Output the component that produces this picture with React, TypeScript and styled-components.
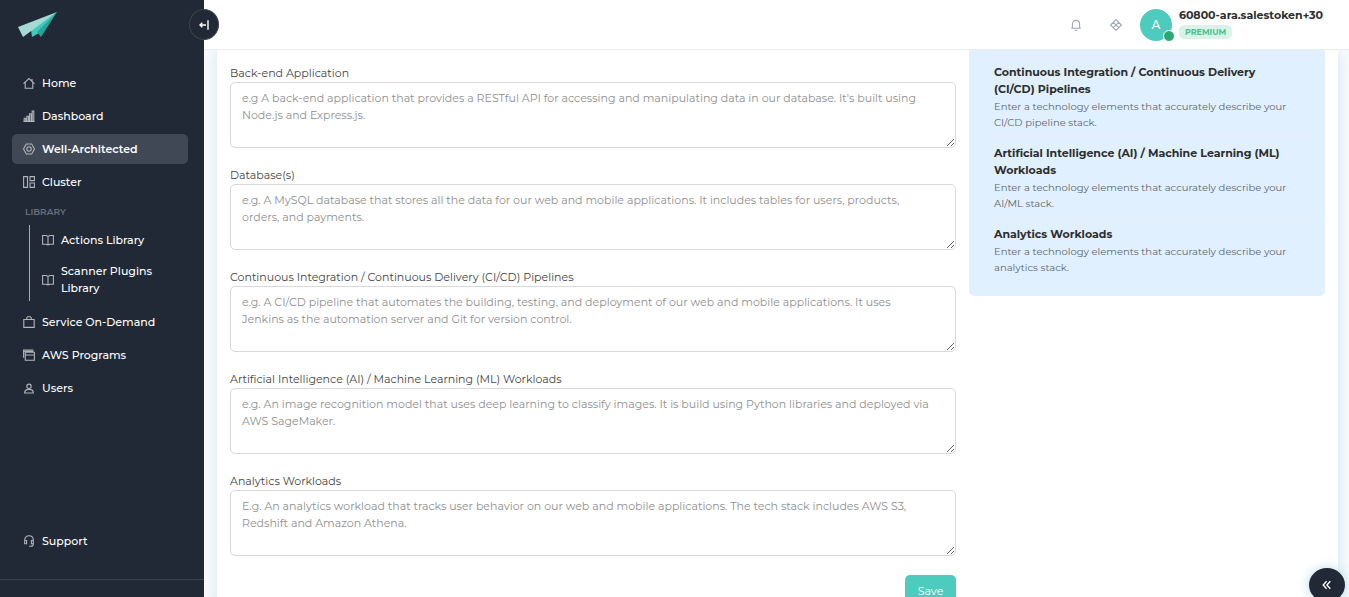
import React from "react";
import styled, { createGlobalStyle, css } from "styled-components";

const Global = createGlobalStyle`
  * { box-sizing: border-box; }
  body { margin: 0; }
  body, button, textarea { font-family: Montserrat, Inter, sans-serif; }
`;

const Shell = styled.div`
  display: grid;
  grid-template-columns: 204px minmax(0, 1fr);
  height: 100vh;
  overflow: hidden;
  background: #fafcfd;
  color: #333;
  font-size: 11px;
  line-height: 17px;
`;

const Sidebar = styled.aside`
  position: relative;
  z-index: 2;
  display: flex;
  flex-direction: column;
  background: #212936;
`;

const LogoLink = styled.a`
  display: block;
  height: 68px;
  padding: 12px 18px;
`;

const round = css`
  display: grid;
  place-items: center;
  padding: 0;
  border-radius: 50%;
  background: #212936;
  color: #fff;
  cursor: pointer;
`;

const CollapseButton = styled.button`
  ${round}
  position: absolute;
  top: 9px;
  right: -15px;
  width: 30px;
  height: 31px;
  border: 1px solid #3b4350;
`;

const Nav = styled.nav`
  display: flex;
  flex-direction: column;
  gap: 3px;
  padding: 0 16px 0 12px;
`;

const NavLink = styled.a<{ $active?: boolean }>`
  display: flex;
  align-items: center;
  gap: 7px;
  min-height: 30px;
  padding: 4px 11px;
  border-radius: 5px;
  background: ${(p) => (p.$active ? "#404855" : "transparent")};
  color: #fff;
  font-weight: ${(p) => (p.$active ? 600 : 500)};
  text-decoration: none;
  svg { flex: none; color: #b0b5bb; }
`;

const GroupLabel = styled.div`
  padding: 6px 13px 4px;
  color: #68717d;
  font-size: 9px;
  font-weight: 600;
  line-height: 12px;
`;

const SubNav = styled.div`
  display: flex;
  flex-direction: column;
  gap: 4px;
  margin: 0 0 3px 17px;
  border-left: 1px solid #a9aeb5;
  ${NavLink} { padding: 4px 10px 4px 12px; }
`;

const Spacer = styled.div`
  flex: 1;
`;

const SidebarFooter = styled.div`
  height: 18px;
  margin-top: 23px;
  border-top: 1px solid #39424f;
`;

const Main = styled.div`
  display: flex;
  flex-direction: column;
  min-width: 0;
  min-height: 0;
`;

const Header = styled.header`
  position: relative;
  z-index: 1;
  flex: none;
  display: flex;
  align-items: center;
  justify-content: flex-end;
  height: 50px;
  padding-right: 26px;
  border-bottom: 1px solid #ebedf0;
  background: #fff;
`;

const IconButton = styled.button`
  display: grid;
  place-items: center;
  width: 40px;
  height: 30px;
  padding: 0;
  border: 0;
  background: none;
  color: #a0a8bc;
  cursor: pointer;
`;

const Account = styled.div`
  display: flex;
  align-items: center;
  gap: 7px;
  margin-left: 4px;
`;

const Avatar = styled.div`
  position: relative;
  display: grid;
  place-items: center;
  width: 32px;
  height: 32px;
  border-radius: 50%;
  background: #4ccbbe;
  color: #fff;
  font-size: 12px;
  font-weight: 500;
`;

const Status = styled.span`
  position: absolute;
  right: -3px;
  bottom: -1px;
  width: 12px;
  height: 12px;
  border: 1px solid #fff;
  border-radius: 50%;
  background: #28a872;
`;

const Identity = styled.div`
  padding-bottom: 3px;
`;

const UserName = styled.div`
  color: #2d2d2d;
  font-weight: 700;
  line-height: 17px;
`;

const Badge = styled.div`
  width: fit-content;
  margin-top: 1px;
  padding: 0 6px;
  border-radius: 5px;
  background: #d9f3e8;
  color: #45c492;
  font-size: 8px;
  font-weight: 700;
  line-height: 14px;
`;

const Content = styled.main`
  flex: 1;
  min-height: 0;
  padding: 0 11px 0 13px;
  overflow: hidden;
`;

const Card = styled.section`
  display: grid;
  grid-template-columns: minmax(0, 726fr) minmax(0, 356fr);
  align-items: start;
  gap: 13px;
  min-height: 100%;
  padding: 0 13px;
  background: #fff;
  box-shadow: 0 0 16px #cfe3ef;
`;

const Form = styled.form`
  display: flex;
  flex-direction: column;
  gap: 19px;
  padding-top: 15px;
`;

const Field = styled.div`
  display: flex;
  flex-direction: column;
`;

const Label = styled.label`
  color: #444;
`;

const TextArea = styled.textarea`
  display: block;
  width: 100%;
  height: 66px;
  padding: 7px 20px 7px 11px;
  border: 1px solid #d8d9da;
  border-radius: 5px;
  background: #fff;
  color: #333;
  font-size: 11px;
  line-height: 17px;
  resize: vertical;
  &::placeholder { color: #8f8f8f; opacity: 1; }
`;

const SaveButton = styled.button`
  align-self: flex-end;
  width: 51px;
  height: 32px;
  border: 0;
  border-radius: 5px;
  background: #4ccbbe;
  color: #fff;
  font-size: 11px;
  cursor: pointer;
`;

const Tips = styled.aside`
  padding: 7px 13px 13px;
  border-radius: 0 0 5px 5px;
  background: #e0f0ff;
`;

const Tip = styled.section`
  padding: 6px 20px 7px 12px;
  border-top: 1px solid #e9eff4;
`;

const TipTitle = styled.h3`
  margin: 0;
  color: #2d2d2d;
  font-size: 11px;
  font-weight: 700;
  line-height: 17px;
`;

const TipText = styled.p`
  margin: 1px 0 0;
  color: #5f666e;
  font-size: 10px;
  line-height: 16px;
`;

const ExpandButton = styled.button`
  ${round}
  position: fixed;
  z-index: 3;
  right: 4px;
  bottom: -5px;
  width: 36px;
  height: 34px;
  border: 0;
  box-shadow: 0 0 12px #bcd9e6;
`;

const paths: Record<string, React.ReactNode> = {
  home: <path d="M.5 6.6 6 1.5l5.5 5.1M2.2 5.5v5.8h7.6V5.5M9 4V2" />,
  dashboard: <path d="M.4 11.4h11.2M1.2 11V8.2h1.6V11M3.9 11V6.2h1.6V11M6.6 11V3.7h1.6V11M9.2 11V1h1.6v10" />,
  hexagon: <><path d="M3.3 1h5.4l2.8 5-2.8 5H3.3L.5 6z" /><circle cx="6" cy="6" r="2.2" /></>,
  cluster: <path d="M.6.6h3.9v10.8H.6zM7 .6h4.4v4H7zM7 7h4.4v4.4H7z" />,
  book: <path d="M6 2.3v8M.6 1.5h3.6L6 2.4l1.8-.9h3.6v8.7H7.8L6 11l-1.8-.8H.6z" />,
  bag: <path d="M.8 3.5h10.4v7.9H.8zM3.7 3.3V2l1-1.3h2.6l1 1.3v1.3" />,
  programs: <path d="M2.3 3.2h9.1v8H2.3zM2.3 6h9.1M.6 8.8V1h9.8M.6 2.2h9.8" />,
  user: <><circle cx="6" cy="4.3" r="2.2" /><path d="M1.6 11c0-2.8 1.8-3.6 4.4-3.6s4.4.8 4.4 3.6z" /></>,
  support: <path d="M1.7 8V5C1.7-.7 10.3-.7 10.3 5v4.3c0 1.3-1 2-2.5 2H6M1.7 5.5h1.9v3.3H1.7zM8.4 5.5h1.9v3.3H8.4z" />,
  bell: <path d="M1.1 9.2h9.8M2.4 9.2V5.3c0-5.2 7.2-5.2 7.2 0v3.9M4.6 11.3h2.8M6 1.4V.4" />,
  diamond: <path d="M6 .6 11.4 6 6 11.4.6 6zM3.3 3.3l5.4 5.4M8.7 3.3 3.3 8.7" />,
  collapse: <path d="M10 1.3v9.4M8 6H2M4.3 3.7 2 6l2.3 2.3" strokeWidth="1.4" />,
  expand: <path d="M5.6 2.3 2.2 6l3.4 3.7M9.3 2.3 5.9 6l3.4 3.7" strokeWidth="1.3" />,
};

function Icon({ name, size = 12 }: { name: string; size?: number }) {
  return (
    <svg width={size} height={size} viewBox="0 0 12 12" fill="none" stroke="currentColor" strokeWidth="1.1" aria-hidden="true">
      {paths[name]}
    </svg>
  );
}

function Item({ icon, label, active }: { icon: string; label: string; active?: boolean }) {
  return (
    <NavLink href="#" $active={active} aria-current={active ? "page" : undefined}>
      <Icon name={icon} />
      <span>{label}</span>
    </NavLink>
  );
}

const fields = [
  ["backend", "Back-end Application", "e.g A back-end application that provides a RESTful API for accessing and manipulating data in our database. It's built using Node.js and Express.js."],
  ["database", "Database(s)", "e.g. A MySQL database that stores all the data for our web and mobile applications. It includes tables for users, products, orders, and payments."],
  ["cicd", "Continuous Integration / Continuous Delivery (CI/CD) Pipelines", "e.g. A CI/CD pipeline that automates the building, testing, and deployment of our web and mobile applications. It uses Jenkins as the automation server and Git for version control."],
  ["aiml", "Artificial Intelligence (AI) / Machine Learning (ML) Workloads", "e.g. An image recognition model that uses deep learning to classify images. It is build using Python libraries and deployed via AWS SageMaker."],
  ["analytics", "Analytics Workloads", "E.g. An analytics workload that tracks user behavior on our web and mobile applications. The tech stack includes AWS S3, Redshift and Amazon Athena."],
];

const tips = [
  ["Continuous Integration / Continuous Delivery (CI/CD) Pipelines", "Enter a technology elements that accurately describe your CI/CD pipeline stack."],
  ["Artificial Intelligence (AI) / Machine Learning (ML) Workloads", "Enter a technology elements that accurately describe your AI/ML stack."],
  ["Analytics Workloads", "Enter a technology elements that accurately describe your analytics stack."],
];

export default function App() {
  return (
    <>
      <Global />
      <Shell>
        <Sidebar>
          <LogoLink href="#" aria-label="Home page">
            <svg width="40" height="26" viewBox="0 0 40 26" aria-hidden="true">
              <path d="M39 0 13 18l1 7 7-4z" fill="#43cabb" />
              <path d="M39 0 19 20l4 5z" fill="#20a99b" />
              <path d="M39 0 0 15l5 10z" fill="#a5d9d3" />
            </svg>
          </LogoLink>
          <CollapseButton aria-label="Collapse sidebar"><Icon name="collapse" /></CollapseButton>
          <Nav>
            <Item icon="home" label="Home" />
            <Item icon="dashboard" label="Dashboard" />
            <Item icon="hexagon" label="Well-Architected" active />
            <Item icon="cluster" label="Cluster" />
            <GroupLabel>LIBRARY</GroupLabel>
            <SubNav>
              <Item icon="book" label="Actions Library" />
              <Item icon="book" label="Scanner Plugins Library" />
            </SubNav>
            <Item icon="bag" label="Service On-Demand" />
            <Item icon="programs" label="AWS Programs" />
            <Item icon="user" label="Users" />
          </Nav>
          <Spacer />
          <Nav><Item icon="support" label="Support" /></Nav>
          <SidebarFooter />
        </Sidebar>
        <Main>
          <Header>
            <IconButton aria-label="Notifications"><Icon name="bell" /></IconButton>
            <IconButton aria-label="Apps"><Icon name="diamond" /></IconButton>
            <Account>
              <Avatar>A<Status /></Avatar>
              <Identity>
                <UserName>60800-ara.salestoken+30</UserName>
                <Badge>PREMIUM</Badge>
              </Identity>
            </Account>
          </Header>
          <Content>
            <Card>
              <Form>
                {fields.map(([id, label, hint]) => (
                  <Field key={id}>
                    <Label htmlFor={id}>{label}</Label>
                    <TextArea id={id} placeholder={hint} />
                  </Field>
                ))}
                <SaveButton type="button">Save</SaveButton>
              </Form>
              <Tips>
                {tips.map(([title, text]) => (
                  <Tip key={title}>
                    <TipTitle>{title}</TipTitle>
                    <TipText>{text}</TipText>
                  </Tip>
                ))}
              </Tips>
            </Card>
          </Content>
        </Main>
        <ExpandButton aria-label="Open panel"><Icon name="expand" /></ExpandButton>
      </Shell>
    </>
  );
}
